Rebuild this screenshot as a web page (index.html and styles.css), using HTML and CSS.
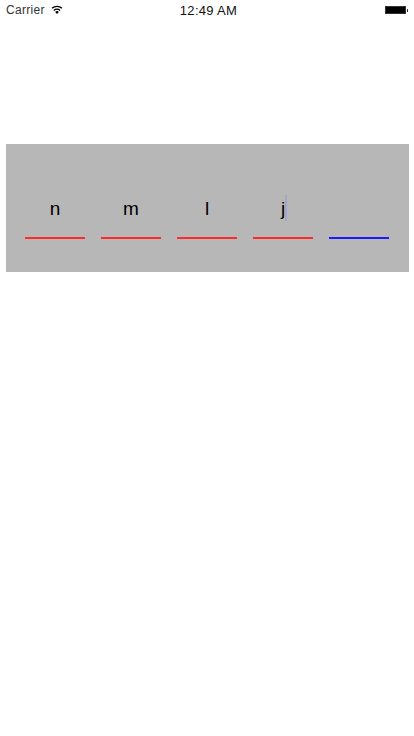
FILE: index.html
```html
<!DOCTYPE html>
<html lang="en">
<head>
<meta charset="utf-8">
<title>Code entry</title>
<link rel="stylesheet" href="styles.css">
</head>
<body>
<div class="status">
  <div class="status-left">
    <span>Carrier</span>
    <svg class="wifi" width="12" height="9" viewBox="0 0 14 10.5"><path d="M7 10.5 4.9 8.1a3 3 0 0 1 4.2 0z" fill="#000"/><path d="M3.4 6.4a5.2 5.2 0 0 1 7.2 0M1.2 3.9a8.4 8.4 0 0 1 11.6 0" fill="none" stroke="#000" stroke-width="1.6"/></svg>
  </div>
  <div class="status-time">12:49 AM</div>
  <div class="status-right">
    <div class="battery"></div>
    <div class="battery-tip"></div>
  </div>
</div>
<div class="panel">
  <div class="cell"><span class="char">n</span></div>
  <div class="cell"><span class="char">m</span></div>
  <div class="cell"><span class="char">l</span></div>
  <div class="cell"><span class="char">j</span><span class="caret"></span></div>
  <div class="cell active"></div>
</div>
</body>
</html>
```
FILE: styles.css
```css
html, body { margin: 0; padding: 0; background: #fff; }
body { font-family: "Liberation Sans", Arial, sans-serif; color: #000; }
.status { position: relative; height: 20px; display: flex; align-items: center; justify-content: space-between; padding: 0 6px; font-size: 12px; }
.status-left { display: flex; align-items: center; gap: 6px; color: #333; letter-spacing: 0.3px; }
.wifi { margin-top: -1px; }
.status-time { position: absolute; left: 3px; right: 0; text-align: center; font-size: 13px; color: #111; letter-spacing: 0.3px; }
.status-right { display: flex; align-items: center; }
.battery { width: 21px; height: 8px; background: #000; border: 0.5px solid #333; box-sizing: border-box; }
.battery-tip { width: 1px; height: 3px; background: #333; margin-left: 1px; }
.panel { margin: 124px 5px 0 6px; height: 128px; background: #b7b7b7; box-sizing: border-box; padding: 51px 0 0 19px; display: flex; gap: 16px; align-items: flex-start; }
.cell { position: relative; width: 60px; height: 44px; box-sizing: border-box; border-bottom: 2px solid #ff2a2a; display: flex; justify-content: center; font-size: 19px; line-height: 27px; }
.cell.active { border-bottom-color: #1a1aff; }
.char { display: block; }
.caret { position: absolute; left: 32px; top: 0; width: 2px; height: 26px; background: #a3a6c6; }
```
